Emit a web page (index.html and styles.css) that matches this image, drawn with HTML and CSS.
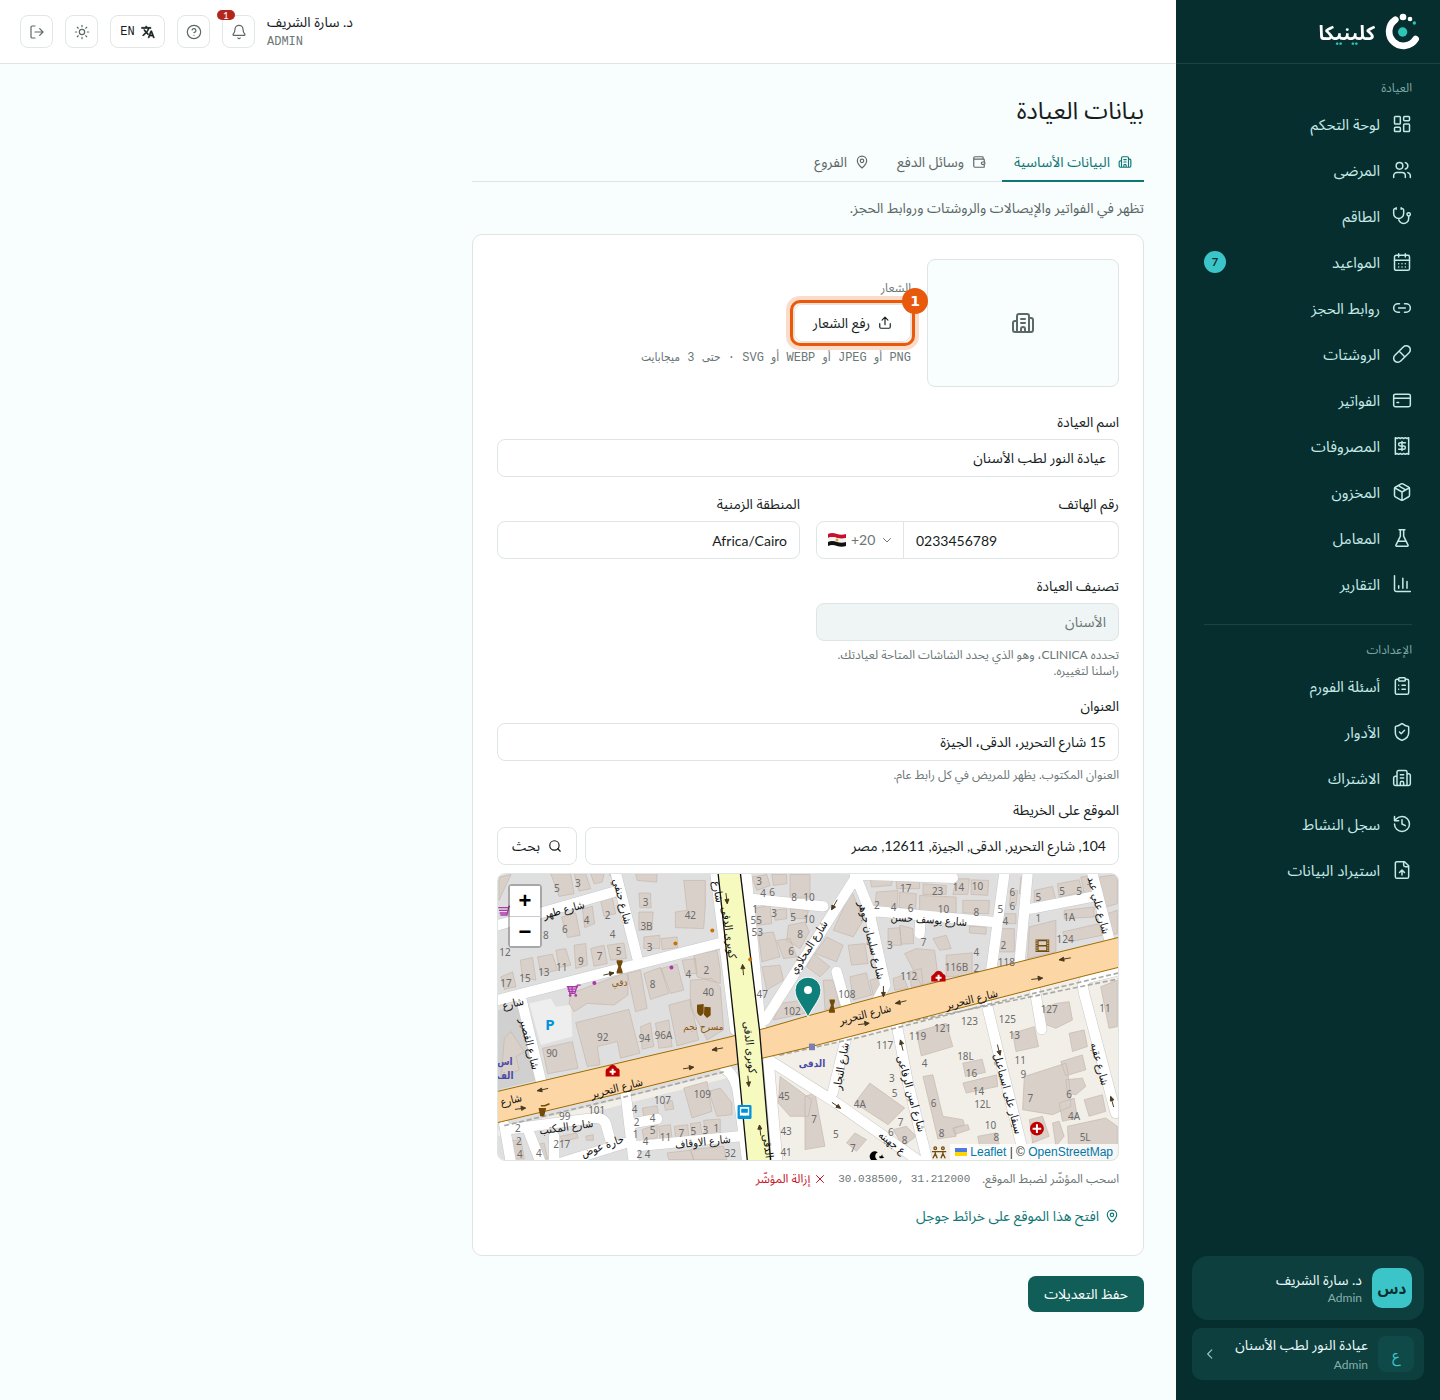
FILE: index.html
```html
<!DOCTYPE html>
<html lang="ar" dir="rtl">
<head>
<meta charset="utf-8">
<meta name="viewport" content="width=device-width, initial-scale=1">
<title>بيانات العيادة</title>
<link rel="stylesheet" href="styles.css">
</head>
<body>
<svg class="sprite" aria-hidden="true">
  <symbol id="i-dashboard" viewBox="0 0 24 24"><rect x="3" y="3" width="7" height="9" rx="1"/><rect x="14" y="3" width="7" height="5" rx="1"/><rect x="14" y="12" width="7" height="9" rx="1"/><rect x="3" y="16" width="7" height="5" rx="1"/></symbol>
  <symbol id="i-users" viewBox="0 0 24 24"><path d="M16 21v-2a4 4 0 0 0-4-4H6a4 4 0 0 0-4 4v2M22 21v-2a4 4 0 0 0-3-3.87M16 3.13a4 4 0 0 1 0 7.75"/><circle cx="9" cy="7" r="4"/></symbol>
  <symbol id="i-steth" viewBox="0 0 24 24"><path d="M11 2v2M5 2v2M5 3H4a2 2 0 0 0-2 2v4a6 6 0 0 0 12 0V5a2 2 0 0 0-2-2h-1M8 15a6 6 0 0 0 12 0v-3"/><circle cx="20" cy="10" r="2"/></symbol>
  <symbol id="i-calendar" viewBox="0 0 24 24"><rect x="3" y="4" width="18" height="18" rx="2"/><path d="M8 2v4M16 2v4M3 10h18M8 14h.01M12 14h.01M16 14h.01M8 18h.01M12 18h.01M16 18h.01"/></symbol>
  <symbol id="i-link" viewBox="0 0 24 24"><path d="M9 17H7A5 5 0 0 1 7 7h2M15 7h2a5 5 0 1 1 0 10h-2M8 12h8"/></symbol>
  <symbol id="i-pill" viewBox="0 0 24 24"><path d="m10.5 20.5 10-10a4.95 4.95 0 1 0-7-7l-10 10a4.95 4.95 0 1 0 7 7ZM8.5 8.5l7 7"/></symbol>
  <symbol id="i-card" viewBox="0 0 24 24"><rect x="2" y="5" width="20" height="15" rx="2"/><path d="M2 10h20M6 15h2"/></symbol>
  <symbol id="i-receipt" viewBox="0 0 24 24"><path d="M4 2v20l2-1 2 1 2-1 2 1 2-1 2 1 2-1 2 1V2l-2 1-2-1-2 1-2-1-2 1-2-1-2 1ZM16 8h-6a2 2 0 1 0 0 4h4a2 2 0 1 1 0 4H8M12 17.5v-11"/></symbol>
  <symbol id="i-package" viewBox="0 0 24 24"><path d="m7.5 4.27 9 5.15M21 8a2 2 0 0 0-1-1.73l-7-4a2 2 0 0 0-2 0l-7 4A2 2 0 0 0 3 8v8a2 2 0 0 0 1 1.73l7 4a2 2 0 0 0 2 0l7-4A2 2 0 0 0 21 16ZM3.3 7l8.7 5 8.7-5M12 22V12"/></symbol>
  <symbol id="i-flask" viewBox="0 0 24 24"><path d="M10 2v7.527a2 2 0 0 1-.211.896L4.72 20.55a1 1 0 0 0 .9 1.45h12.76a1 1 0 0 0 .9-1.45l-5.069-10.127A2 2 0 0 1 14 9.527V2M8.5 2h7M7 16h10"/></symbol>
  <symbol id="i-chart" viewBox="0 0 24 24"><path d="M3 2v17a2 2 0 0 0 2 2h17M8 17v-3M13 17V5M18 17V9"/></symbol>
  <symbol id="i-clipboard" viewBox="0 0 24 24"><rect x="8" y="2" width="8" height="4" rx="1"/><path d="M16 4h2a2 2 0 0 1 2 2v14a2 2 0 0 1-2 2H6a2 2 0 0 1-2-2V6a2 2 0 0 1 2-2h2M12 11h4M12 16h4M8 11h.01M8 16h.01"/></symbol>
  <symbol id="i-shield" viewBox="0 0 24 24"><path d="M20 13c0 5-3.5 7.500-7.660 8.950a1 1 0 0 1-.67-.01C7.500 20.500 4 18 4 13V6a1 1 0 0 1 1-1c2 0 4.500-1.200 6.240-2.720a1.170 1.170 0 0 1 1.520 0C14.510 3.810 17 5 19 5a1 1 0 0 1 1 1ZM9 12l2 2 4-4"/></symbol>
  <symbol id="i-building" viewBox="0 0 24 24"><path d="M10 12h4M10 8h4M14 21v-3a2 2 0 0 0-4 0v3M6 10H4a2 2 0 0 0-2 2v7a2 2 0 0 0 2 2h16a2 2 0 0 0 2-2V9a2 2 0 0 0-2-2h-2M6 21V5a2 2 0 0 1 2-2h8a2 2 0 0 1 2 2v16"/></symbol>
  <symbol id="i-history" viewBox="0 0 24 24"><path d="M3 12a9 9 0 1 0 9-9 9.750 9.750 0 0 0-6.740 2.740L3 8M3 3v5h5M12 7v5l4 2"/></symbol>
  <symbol id="i-fileup" viewBox="0 0 24 24"><path d="M15 2H6a2 2 0 0 0-2 2v16a2 2 0 0 0 2 2h12a2 2 0 0 0 2-2V7ZM14 2v4a2 2 0 0 0 2 2h4M12 12v6M15 15l-3-3-3 3"/></symbol>
  <symbol id="i-bell" viewBox="0 0 24 24"><path d="M10.268 21a2 2 0 0 0 3.464 0M3.262 15.326A1 1 0 0 0 4 17h16a1 1 0 0 0 .74-1.673C19.410 13.956 18 12.499 18 8A6 6 0 0 0 6 8c0 4.499-1.411 5.956-2.738 7.326"/></symbol>
  <symbol id="i-help" viewBox="0 0 24 24"><circle cx="12" cy="12" r="10"/><path d="M9.090 9a3 3 0 0 1 5.830 1c0 2-3 3-3 3M12 17h.01"/></symbol>
  <symbol id="i-sun" viewBox="0 0 24 24"><circle cx="12" cy="12" r="4"/><path d="M12 2v2M12 20v2M4.930 4.930l1.410 1.410M17.660 17.660l1.410 1.410M2 12h2M20 12h2M6.340 17.660l-1.410 1.410M19.070 4.930l-1.410 1.410"/></symbol>
  <symbol id="i-logout" viewBox="0 0 24 24"><path d="M9 21H5a2 2 0 0 1-2-2V5a2 2 0 0 1 2-2h4M16 17l5-5-5-5M21 12H9"/></symbol>
  <symbol id="i-translate" viewBox="0 0 24 24"><path d="M12.870 15.070l-2.540-2.510.03-.03A17.520 17.520 0 0 0 14.070 6H17V4h-7V2H8v2H1v2h11.170C11.500 7.920 10.440 9.750 9 11.350 8.070 10.320 7.300 9.190 6.690 8h-2c.73 1.630 1.730 3.170 2.980 4.560l-5.090 5.020L4 19l5-5 3.110 3.110.76-2.040zM18.500 10h-2L12 22h2l1.120-3h4.750L21 22h2l-4.500-12zm-2.620 7l1.620-4.330L19.120 17h-3.240z"/></symbol>
  <symbol id="i-wallet" viewBox="0 0 24 24"><path d="M19 7V4a1 1 0 0 0-1-1H5a2 2 0 0 0 0 4h15a1 1 0 0 1 1 1v4h-3a2 2 0 0 0 0 4h3a1 1 0 0 0 1-1v-2a1 1 0 0 0-1-1M3 5v14a2 2 0 0 0 2 2h15a1 1 0 0 0 1-1v-4"/></symbol>
  <symbol id="i-pin" viewBox="0 0 24 24"><path d="M20 10c0 4.990-5.540 10.190-7.400 11.800a1 1 0 0 1-1.200 0C9.540 20.190 4 14.990 4 10a8 8 0 0 1 16 0"/><circle cx="12" cy="10" r="3"/></symbol>
  <symbol id="i-upload" viewBox="0 0 24 24"><path d="M21 13v6a2 2 0 0 1-2 2H5a2 2 0 0 1-2-2v-6M17 7l-5-5-5 5M12 2v13"/></symbol>
  <symbol id="i-search" viewBox="0 0 24 24"><circle cx="11" cy="11" r="8"/><path d="m21 21-4.300-4.300"/></symbol>
  <symbol id="i-x" viewBox="0 0 24 24"><path d="M19 5 5 19M5 5l14 14"/></symbol>
  <symbol id="i-down" viewBox="0 0 24 24"><path d="m5 9 7 7 7-7"/></symbol>
  <symbol id="i-left" viewBox="0 0 24 24"><path d="m15 5-7 7 7 7"/></symbol>
</svg>

<div class="app">
  <aside class="sidebar">
    <a class="brand" href="#">
      <svg class="brand-mark" viewBox="627 39 108 114" aria-hidden="true"><path d="M661 59A43 43 0 1 0 722 117" fill="none" stroke="#fff" stroke-width="20" stroke-linecap="round"/><circle cx="684" cy="51" r="10" fill="#fff"/><circle cx="705" cy="57" r="7" fill="#fff"/><circle cx="718" cy="69" r="5" fill="#2ec4b6"/><circle cx="683" cy="96" r="14" fill="#2ec4b6"/></svg>
      <span class="brand-name">كلينيكا</span>
    </a>
    <nav class="nav" aria-label="القائمة الرئيسية">
      <h2 class="nav-title">العيادة</h2>
      <ul class="nav-list">
        <li><a href="#"><svg class="icon"><use href="#i-dashboard"/></svg>لوحة التحكم</a></li>
        <li><a href="#"><svg class="icon"><use href="#i-users"/></svg>المرضى</a></li>
        <li><a href="#"><svg class="icon"><use href="#i-steth"/></svg>الطاقم</a></li>
        <li><a href="#"><svg class="icon"><use href="#i-calendar"/></svg>المواعيد<span class="count">7</span></a></li>
        <li><a href="#"><svg class="icon"><use href="#i-link"/></svg>روابط الحجز</a></li>
        <li><a href="#"><svg class="icon"><use href="#i-pill"/></svg>الروشتات</a></li>
        <li><a href="#"><svg class="icon"><use href="#i-card"/></svg>الفواتير</a></li>
        <li><a href="#"><svg class="icon"><use href="#i-receipt"/></svg>المصروفات</a></li>
        <li><a href="#"><svg class="icon"><use href="#i-package"/></svg>المخزون</a></li>
        <li><a href="#"><svg class="icon"><use href="#i-flask"/></svg>المعامل</a></li>
        <li><a href="#"><svg class="icon"><use href="#i-chart"/></svg>التقارير</a></li>
      </ul>
      <hr class="nav-rule">
      <h2 class="nav-title">الإعدادات</h2>
      <ul class="nav-list">
        <li><a href="#"><svg class="icon"><use href="#i-clipboard"/></svg>أسئلة الفورم</a></li>
        <li><a href="#"><svg class="icon"><use href="#i-shield"/></svg>الأدوار</a></li>
        <li><a href="#"><svg class="icon"><use href="#i-building"/></svg>الاشتراك</a></li>
        <li><a href="#"><svg class="icon"><use href="#i-history"/></svg>سجل النشاط</a></li>
        <li><a href="#"><svg class="icon"><use href="#i-fileup"/></svg>استيراد البيانات</a></li>
      </ul>
    </nav>
    <div class="accounts">
      <div class="account">
        <span class="avatar">دس</span>
        <span class="who"><strong>د. سارة الشريف</strong><small>Admin</small></span>
      </div>
      <button class="clinic" type="button">
        <span class="avatar avatar-dim">ع</span>
        <span class="who"><strong>عيادة النور لطب الأسنان</strong><small>Admin</small></span>
        <svg class="icon icon-14"><use href="#i-left"/></svg>
      </button>
    </div>
  </aside>

  <div class="page">
    <header class="topbar">
      <div class="me"><span class="me-name">د. سارة الشريف</span><span class="me-role">ADMIN</span></div>
      <button class="tool" type="button" aria-label="الإشعارات"><svg class="icon icon-16"><use href="#i-bell"/></svg><span class="alert">1</span></button>
      <button class="tool" type="button" aria-label="مساعدة"><svg class="icon icon-16"><use href="#i-help"/></svg></button>
      <button class="tool tool-lang" type="button"><svg class="icon-solid"><use href="#i-translate"/></svg>EN</button>
      <button class="tool" type="button" aria-label="المظهر"><svg class="icon icon-16"><use href="#i-sun"/></svg></button>
      <button class="tool" type="button" aria-label="خروج"><svg class="icon icon-16"><use href="#i-logout"/></svg></button>
    </header>

    <main class="main">
      <form class="content">
        <h1>بيانات العيادة</h1>
        <nav class="tabs" aria-label="أقسام البيانات">
          <a class="tab is-active" href="#"><svg class="icon icon-14"><use href="#i-building"/></svg>البيانات الأساسية</a>
          <a class="tab" href="#"><svg class="icon icon-14"><use href="#i-wallet"/></svg>وسائل الدفع</a>
          <a class="tab" href="#"><svg class="icon icon-14"><use href="#i-pin"/></svg>الفروع</a>
        </nav>
        <p class="lead">تظهر في الفواتير والإيصالات والروشتات وروابط الحجز.</p>

        <section class="card">
          <div class="logo-row">
            <div class="logo-box"><svg class="icon icon-24"><use href="#i-building"/></svg></div>
            <div class="logo-info">
              <span class="hint">الشعار</span>
              <div class="spot">
                <button class="btn" type="button"><svg class="icon icon-14"><use href="#i-upload"/></svg>رفع الشعار</button>
                <span class="step">1</span>
              </div>
              <span class="hint hint-mono">PNG أو JPEG أو WEBP أو SVG · حتى 3 ميجابايت</span>
            </div>
          </div>

          <div class="fields">
            <div class="field wide">
              <label for="name">اسم العيادة</label>
              <input id="name" type="text" value="عيادة النور لطب الأسنان">
            </div>
            <div class="field">
              <label for="phone">رقم الهاتف</label>
              <div class="phone" dir="ltr">
                <div class="dial">
                  <svg class="flag" viewBox="0 0 20 16" aria-hidden="true"><path d="M1 2c3-1.500 6-1 9 0s6 1 9 0v4c-3 1-6 1-9 0s-6-1.500-9 0z" fill="#c8102e"/><path d="M1 6c3-1.500 6-1 9 0s6 1 9 0v4c-3 1-6 1-9 0s-6-1.500-9 0z" fill="#f4f4f4"/><path d="M1 10c3-1.500 6-1 9 0s6 1 9 0v4c-3 1-6 1-9 0s-6-1.500-9 0z" fill="#111"/><circle cx="10" cy="8" r="1.500" fill="#d9a93a"/></svg>
                  <select aria-label="كود الدولة"><option>+20</option></select>
                  <svg class="icon icon-12"><use href="#i-down"/></svg>
                </div>
                <input id="phone" type="tel" value="0233456789">
              </div>
            </div>
            <div class="field">
              <label for="zone">المنطقة الزمنية</label>
              <input id="zone" type="text" value="Africa/Cairo">
            </div>
            <div class="field half">
              <label for="kind">تصنيف العيادة</label>
              <input id="kind" type="text" value="الأسنان" disabled>
              <p class="hint">تحدده CLINICA، وهو الذي يحدد الشاشات المتاحة لعيادتك.<br>راسلنا لتغييره.</p>
            </div>
            <div class="field wide">
              <label for="address">العنوان</label>
              <input id="address" type="text" value="15 شارع التحرير، الدقى، الجيزة">
              <p class="hint">العنوان المكتوب. يظهر للمريض في كل رابط عام.</p>
            </div>
          </div>

          <div class="field location">
            <label for="place">الموقع على الخريطة</label>
            <div class="search">
              <input id="place" type="text" value="104, شارع التحرير, الدقى, الجيزة, 12611, مصر">
              <button class="btn" type="button"><svg class="icon icon-14"><use href="#i-search"/></svg>بحث</button>
            </div>
          </div>

          <div class="map" dir="ltr">
            <svg class="map-art" viewBox="0 0 622 288" preserveAspectRatio="xMidYMid slice" role="img" aria-label="خريطة الدقى">
              <rect width="622" height="288" fill="#e0dfdf"/>
              <g transform="translate(-7 -3) scale(.33333)">
                <path d="M840 540 1890 280V880H840zM20 780 740 600 770 880H20z" fill="#f2efe9"/>
                <path d="M20 800 730 620 760 880H20z" fill="#e0dfdf"/>
                <path d="M20 420 95 410 145 630 20 660z" fill="#d0d0d0"/>
                <path d="M115 400 180 385 195 410 240 405 245 500 150 525z" fill="#eee"/>
                <g class="b">
                  <path d="M180 10 240 10 250 70 205 78zM250 10 285 10 300 55 265 62zM300 10 340 10 335 35 310 40zM24 20 60 12 24 90zM30 320 65 305 75 350 40 358zM88 270 125 262 135 330 95 322zM140 260 185 252 200 300 150 312zM195 240 225 235 240 285 205 292zM250 225 285 220 290 285 255 295zM300 235 340 225 350 280 310 288zM350 225 400 218 408 265 360 270zM330 90 365 82 375 130 340 138zM275 115 305 108 312 160 282 172zM212 140 255 128 268 195 230 202zM445 68 480 68 482 112 448 112zM445 125 488 125 484 180 445 180zM355 10 385 10 388 15 360 18z"/>
                  <path d="M435 10 500 10 498 35 440 30zM580 30 645 30 645 105 640 175 555 172 555 125 590 120zM460 200 508 195 508 235 460 235zM512 205 560 200 562 232 515 238zM235 400 240 370 400 310 412 315 412 375 370 405 290 400 250 425zM410 310 450 300 470 415 435 425zM460 310 510 292 535 370 480 388zM512 295 560 282 580 360 540 370zM575 270 615 265 620 310 585 312zM610 255 680 240 690 300 690 340 620 320zM600 330 665 325 690 350 700 480 650 510 600 410zM255 458 415 418 448 550 390 565 380 515 320 530 328 585 290 590zM450 470 480 458 490 530 455 538zM535 405 600 388 625 510 560 528zM495 460 535 450 545 530 505 535zM155 535 245 515 262 595 170 612zM40 505 60 485 100 545 75 560 85 600 30 625z"/>
                  <path d="M580 655 650 635 665 725 605 745zM655 665 690 655 725 700 725 735 680 740zM520 700 545 692 550 718 525 722zM455 715 500 708 505 745 460 740zM455 780 500 765 500 805 460 810zM505 770 540 765 545 808 508 812zM552 770 592 765 595 800 555 805zM600 762 630 758 635 798 605 800zM640 752 690 748 690 795 645 798zM530 850 600 842 610 870 535 870zM600 840 700 830 710 870 610 870zM208 800 258 790 262 805 215 815zM285 800 308 795 308 812 288 812zM50 815 90 810 100 868 60 868zM120 830 160 820 170 868 130 868z"/>
                  <path d="M785 20 830 12 840 45 800 60zM845 12 890 12 890 40 850 45zM900 12 960 12 960 80 900 82zM785 115 840 105 845 160 800 165zM850 120 890 115 890 145 855 150zM900 115 955 120 950 145 905 145zM895 165 945 155 958 185 930 235 890 210zM860 210 900 205 920 260 880 265zM805 190 850 185 870 260 815 275zM815 290 870 285 880 330 830 360zM870 400 940 390 945 430 850 450z"/>
                  <path d="M1085 60 1120 150 1090 200 1030 180zM1010 200 1060 225 1040 275 975 250zM1075 225 1125 220 1135 280 1085 285zM1000 330 1030 330 1050 410 1005 420zM1080 320 1130 308 1145 375 1090 390zM1140 330 1180 320 1180 370 1150 375zM970 250 1020 290 990 320 950 290z"/>
                  <path d="M1140 15 1210 20 1205 45 1145 50zM1160 65 1225 60 1222 115 1155 110zM1230 65 1280 70 1278 118 1228 112zM1290 75 1400 80 1400 128 1290 122zM1220 20 1290 22 1290 55 1220 55zM1300 40 1370 45 1370 72 1300 72zM1400 25 1440 25 1435 72 1390 72zM1445 28 1498 30 1495 75 1445 72zM1420 90 1500 90 1498 130 1420 128zM1195 175 1230 172 1235 225 1195 225zM1230 165 1270 175 1272 220 1235 222zM1245 250 1280 235 1335 240 1345 315 1350 330 1295 345zM1330 205 1370 195 1385 235 1350 240zM1370 255 1448 248 1448 315 1370 320zM1210 325 1240 315 1255 355 1215 360zM1260 305 1295 295 1300 345 1265 352zM1440 168 1490 170 1490 192 1440 188z"/>
                  <path d="M1565 60 1585 60 1580 105 1560 105zM1595 20 1615 20 1610 70 1590 70zM1535 130 1580 130 1580 160 1535 160zM1530 175 1575 175 1575 245 1530 245zM1635 60 1690 48 1700 90 1635 100zM1705 40 1770 28 1780 65 1710 80zM1775 20 1810 15 1815 65 1785 68zM1620 170 1700 150 1700 245 1615 265zM1725 120 1815 110 1815 140 1725 145zM1720 185 1830 160 1840 195 1740 215zM1830 20 1885 12 1885 100 1850 110zM1855 130 1885 120 1885 190 1865 195z"/>
                  <path d="M1280 485 1370 460 1390 530 1295 558zM1420 580 1478 568 1488 608 1428 620zM1420 640 1522 615 1525 650 1430 670zM1300 620 1330 615 1360 740 1420 750 1425 765 1395 775 1400 800 1345 808zM1390 775 1435 765 1440 780 1395 795zM1140 640 1245 715 1195 765 1095 700zM1210 780 1250 770 1280 800 1240 830zM1070 820 1095 790 1130 810 1100 845zM1465 800 1520 790 1530 825 1470 830zM1570 490 1635 470 1648 530 1580 545zM1660 415 1700 400 1740 395 1750 450 1700 475 1660 460zM1605 620 1730 580 1735 600 1740 640 1745 710 1690 735 1600 720zM1715 575 1780 555 1790 600 1730 618zM1740 490 1785 480 1795 530 1750 545zM1730 630 1780 625 1790 650 1760 675 1735 670zM1710 700 1755 685 1765 745 1720 755zM1785 690 1840 675 1850 725 1800 740zM1735 770 1850 745 1885 770 1885 870 1740 865zM1620 750 1660 740 1680 800 1630 820zM1690 760 1710 755 1725 800 1700 830zM1835 350 1885 330 1885 470 1860 475zM870 620 965 690 955 740 900 740 865 700zM945 680 975 670 1005 830 945 840z"/>
                </g>
                <g class="casing">
                  <path d="M20 165 385 60M375 5 440 262M20 390 690 218M92 390 150 632M675 5 735 480M768 5 812 480M780 85 1000 108M1095 25 825 450M1095 10 1135 110 1187 345 1160 395M1095 12 1390 22M1130 120 1510 155M1292 155 1290 190M1545 9 1505 305M1615 9 1590 285M1625 115 1805 80M1810 9 1860 205M1040 305 1072 418M1072 490 1028 670M835 570 945 640 1040 700 1310 890M1220 460 1255 640 1315 880M1490 395 1535 580 1610 880M1635 350 1657 478M1890 300 1800 322Q1775 330 1785 370L1880 730M405 670 430 880M40 765 60 880M60 778 310 745Q345 740 350 780L362 820M115 790 150 880M190 800 190 880M210 880 420 815M440 830 745 800M705 598Q740 620 745 680L772 880M430 760 500 748M835 570 862 880"/>
                </g>
                <g class="road">
                  <path d="M20 165 385 60M375 5 440 262M20 390 690 218M92 390 150 632M675 5 735 480M768 5 812 480M780 85 1000 108M1095 25 825 450M1095 10 1135 110 1187 345 1160 395M1095 12 1390 22M1130 120 1510 155M1292 155 1290 190M1545 9 1505 305M1615 9 1590 285M1625 115 1805 80M1810 9 1860 205M1040 305 1072 418M1072 490 1028 670M835 570 945 640 1040 700 1310 890M1220 460 1255 640 1315 880M1490 395 1535 580 1610 880M1635 350 1657 478M1890 300 1800 322Q1775 330 1785 370L1880 730M405 670 430 880M40 765 60 880M60 778 310 745Q345 740 350 780L362 820M115 790 150 880M190 800 190 880M210 880 420 815M440 830 745 800M705 598Q740 620 745 680L772 880M430 760 500 748M835 570 862 880"/>
                </g>
                <path d="M40 768 400 682 700 606M868 556 1110 502 1500 402 1890 308M1210 465 1890 326" fill="none" stroke="#aaa9a6" stroke-width="5" stroke-dasharray="15 8"/>
                <path d="M15 666 660 515 825 475 945 440 1215 367 1895 200V290L1775 320 1485 395 945 535 740 583 400 668 15 760z" fill="#fcd6a4" stroke="#a06b00" stroke-width="3"/>
                <path d="M683 5 735 490 772 880H842L808 480 750 5z" fill="#f7fabf"/>
                <path d="M683 5 735 490 772 880M842 880 808 480 750 5" fill="none" stroke="#111" stroke-width="4"/>
                <g stroke="#4a3a20" stroke-width="3" fill="#4a3a20">
                  <path d="M139 663 172 656M139 663 152 655 154 666zM104 715 72 719M104 715 90 709 92 722zM665 540 698 534M665 540 678 532 680 544zM610 592 578 597M610 592 596 587 598 600zM1217 400 1250 392M1217 400 1230 391 1232 403zM1138 460 1105 464M1138 460 1124 454 1126 467zM1710 269 1745 263M1710 269 1723 261 1725 273zM1660 324 1626 328M1660 324 1646 318 1648 331zM370 308 338 315M370 308 356 305 358 317z"/>
                  <path d="M711 100 707 68M711 100 704 88 716 86zM757 283 760 315M757 283 752 296 764 295zM776 650 773 618M776 650 769 638 781 636zM808 766 812 798M808 766 803 779 815 778zM1025 118 1042 88M1025 118 1026 104 1037 110zM1181 380 1181 348M1181 380 1175 367 1187 367zM1232 510 1240 542M1232 510 1230 524 1242 521zM1532 556 1524 524M1532 556 1523 545 1535 542zM1052 716 1026 698M1052 716 1038 713 1045 704zM1865 680 1874 712M1865 680 1864 694 1875 690z"/>
                </g>
                <g fill="#c77400"><circle cx="666" cy="181" r="6"/><circle cx="555" cy="220" r="6"/><circle cx="780" cy="268" r="6"/></g>
                <g fill="#ac39ac"><circle cx="543" cy="292" r="6"/><circle cx="311" cy="339" r="6"/></g>
                <g fill="none" stroke="#ac39ac" stroke-width="4"><path d="M270 345 260 345 252 370H235M228 350H262M230 357H258M232 364H254M232 350 238 370M244 350V370"/><path d="M60 108 54 108 48 134H28M22 112H54M24 120H52M26 128H50"/></g>
                <g fill="#ac39ac"><circle cx="238" cy="376" r="4"/><circle cx="255" cy="376" r="4"/></g>
                <path d="M345 620V602Q346 595 352 595Q366 575 380 595Q387 595 387 602V620zM1325 334V318Q1330 313 1332 312Q1347 292 1362 312Q1368 313 1368 320V334z" fill="#bf0000"/>
                <circle cx="1643" cy="777" r="21" fill="#bf0000"/>
                <path d="M366 597V615M357 606H375M1347 314V332M1338 323H1356M1643 764V790M1630 777H1656" stroke="#fff" stroke-width="6"/>
                <g fill="#734a08"><path d="M378 270H396V276L391 290 396 304V310H378V304L383 290 378 276zM1019 388H1035V394L1031 406 1035 422V428H1017V422L1023 406 1019 394zM143 715H166L160 740H148zM620 404 640 402V430L632 438Q622 435 620 425zM642 410 661 412V436L650 444 641 434z"/><path d="M1639 208H1680V245H1639z"/></g>
                <path d="M1648 213H1671V224H1648zM1648 229H1671V240H1648z" fill="#d9d0c9"/>
                <path d="M1643 210V244M1676 210V244" stroke="#e0dfdf" stroke-width="3" stroke-dasharray="4 3"/>
                <path d="M150 708H162L176 702" fill="none" stroke="#734a08" stroke-width="5"/>
                <rect x="742" y="706" width="42" height="42" rx="4" fill="#0092da"/><path d="M749 712H777V738H749z" fill="#fff"/><path d="M753 717H773V729H753zM752 738H758V743H752zM768 738H774V743H768z" fill="#0092da"/>
                <rect x="957" y="521" width="18" height="20" fill="#7981b0"/>
                <g stroke="#734a08" stroke-width="4" fill="none"><circle cx="1337" cy="836" r="4"/><circle cx="1360" cy="836" r="4"/><path d="M1327 846H1370M1337 844V852L1330 866M1337 852 1343 866M1360 844V852L1354 866M1360 852 1367 866"/></g>
                <path d="M1164 848A15 15 0 0 0 1146 873H1180A18 18 0 0 1 1158 866 14 14 0 0 1 1164 848zM1168 860 1174 860 1177 854 1179 861 1184 863 1178 866 1170 866z" fill="#000"/>
              </g>
              <g class="num">
                <text x="59" y="19">5</text><text x="80" y="14">3</text><text x="148" y="33">3</text><text x="193" y="46">42</text><text x="110" y="46">2</text><text x="89" y="51">4</text><text x="67" y="60">6</text><text x="48" y="66">8</text><text x="115" y="65">4</text><text x="149" y="57">3B</text><text x="152" y="78">3</text><text x="7" y="83">12</text><text x="121" y="82">5</text><text x="102" y="87">7</text><text x="83" y="92">9</text><text x="64" y="98">11</text><text x="46" y="103">13</text><text x="27" y="109">15</text><text x="8" y="114">17</text><text x="155" y="115">8</text><text x="191" y="105">4</text><text x="209" y="101">2</text><text x="211" y="123">40</text><text x="105" y="168">92</text><text x="147" y="169">94</text><text x="166" y="166">96A</text><text x="54" y="184">90</text>
                <text x="258" y="40">1</text><text x="259" y="51">55</text><text x="260" y="63">53</text><text x="265" y="125">47</text><text x="295" y="142">102</text><text x="262" y="12">3</text><text x="266" y="24">4</text><text x="275" y="23">6</text><text x="297" y="28">8</text><text x="312" y="28">10</text><text x="277" y="44">3</text><text x="296" y="48">5</text><text x="312" y="50">10</text><text x="303" y="65">8</text><text x="294" y="82">6</text>
                <text x="165" y="231">107</text><text x="205" y="225">109</text><text x="99" y="241">101</text><text x="67" y="247">99</text><text x="137" y="240">4</text><text x="155" y="249">4</text><text x="139" y="253">2</text><text x="20" y="259">2</text><text x="21" y="272">2</text><text x="22" y="285">4</text><text x="41" y="284">4</text><text x="64" y="275">217</text><text x="138" y="265">1</text><text x="155" y="261">5</text><text x="148" y="272">4</text><text x="168" y="268">11</text><text x="184" y="264">7</text><text x="196" y="262">5</text><text x="208" y="261">3</text><text x="219" y="259">1</text><text x="146" y="285">2 4</text><text x="233" y="284">32</text><text x="287" y="227">45</text><text x="289" y="262">43</text><text x="289" y="283">41</text>
                <text x="409" y="19">17</text><text x="441" y="22">23</text><text x="462" y="18">14</text><text x="481" y="17">10</text><text x="516" y="23">6</text><text x="516" y="37">6</text><text x="504" y="40">5</text><text x="542" y="28">5</text><text x="566" y="22">5</text><text x="583" y="22">5</text><text x="380" y="36">2</text><text x="397" y="38">4</text><text x="414" y="39">6</text><text x="447" y="40">10</text><text x="480" y="43">8</text><text x="509" y="52">4</text><text x="542" y="49">1</text><text x="573" y="48">1A</text><text x="569" y="70">124</text><text x="393" y="76">3</text><text x="427" y="73">7</text><text x="480" y="83">4</text><text x="507" y="76">2</text><text x="510" y="93">118</text><text x="460" y="98">116B</text><text x="480" y="99">2</text><text x="412" y="107">112</text><text x="350" y="125">108</text><text x="553" y="140">127</text><text x="473" y="152">123</text><text x="511" y="150">125</text><text x="446" y="159">121</text><text x="421" y="167">119</text><text x="388" y="176">117</text><text x="518" y="166">13</text><text x="609" y="139">11</text>
                <text x="469" y="187">18L</text><text x="524" y="191">11</text><text x="475" y="204">16</text><text x="527" y="205">9</text><text x="428" y="194">4</text><text x="395" y="209">3</text><text x="398" y="224">5</text><text x="482" y="222">14</text><text x="486" y="235">12L</text><text x="363" y="235">4A</text><text x="437" y="234">6</text><text x="534" y="229">7</text><text x="573" y="225">6</text><text x="578" y="247">4A</text><text x="404" y="253">7</text><text x="394" y="263">6</text><text x="494" y="256">10</text><text x="445" y="264">8</text><text x="589" y="268">5L</text><text x="317" y="250">7</text><text x="339" y="265">5</text><text x="356" y="279">7</text><text x="408" y="271">8</text><text x="500" y="268">8</text>
              </g>
              <g class="street">
                <text transform="translate(67 40) rotate(-15)">شارع طهر</text>
                <text transform="translate(121 29) rotate(75)">شارع حنفي</text>
                <text transform="translate(217 19) rotate(80)">شارع</text>
                <text transform="translate(228 60) rotate(82)">كوبرى الدقى</text>
                <text transform="translate(249 175) rotate(84)">كوبرى الدقى</text>
                <text transform="translate(267 274) rotate(82)">الدقى</text>
                <text transform="translate(28 172) rotate(76)">شارع القصير</text>
                <text transform="translate(16 134) rotate(-14)">شارع</text>
                <text transform="translate(120 219) rotate(-14)">شارع التحرير</text>
                <text transform="translate(14 231) rotate(-14)">شارع</text>
                <text transform="translate(369 145) rotate(-14)">شارع التحرير</text>
                <text transform="translate(476 130) rotate(-14)">شارع التحرير</text>
                <text transform="translate(69 258) rotate(-8)">شارع المكتب</text>
                <text transform="translate(106 277) rotate(-20)">حارة عوض</text>
                <text transform="translate(206 273) rotate(-6)">شارع الاوقاف</text>
                <text transform="translate(432 50) rotate(4)">شارع يوسف حسن</text>
                <text transform="translate(371 68) rotate(76)">شارع سليمان جوهر</text>
                <text transform="translate(315 76) rotate(-58)">شارع المحلاوي</text>
                <text transform="translate(599 33) rotate(75)">شارع علي عبد</text>
                <text transform="translate(348 194) rotate(-80)">شارع النجار</text>
                <text transform="translate(411 222) rotate(74)">شارع امين الرفاعى</text>
                <text transform="translate(508 222) rotate(75)">سيقار على اسماعيل</text>
                <text transform="translate(600 192) rotate(75)">شارع عقبه</text>
                <text transform="translate(393 273) rotate(38)">ع جهينه</text>
              </g>
              <g class="poi">
                <text x="122" y="113">دقي</text><text x="206" y="157">مسرح نجم</text>
              </g>
              <g class="station">
                <text x="315" y="194">الدقى</text><text x="7" y="192">اس</text><text x="7" y="206">الف</text>
              </g>
              <text class="parking" x="52" y="157">P</text>
              <path d="M311 144C305 132 298 126 298 117A13 13 0 0 1 324 117C324 126 317 132 311 144Z" fill="#0f7f7c" stroke="#fff" stroke-width="1"/>
              <circle cx="311" cy="117" r="4" fill="#fff"/>
            </svg>
            <div class="zoom">
              <button type="button" aria-label="تكبير">+</button>
              <button type="button" aria-label="تصغير">−</button>
            </div>
            <div class="credit"><svg class="ua" viewBox="0 0 12 8" aria-hidden="true"><path d="M0 0h12v4H0z" fill="#4c7be1"/><path d="M0 4h12v4H0z" fill="#ffd500"/></svg> <a href="#">Leaflet</a> | © <a href="#">OpenStreetMap</a></div>
          </div>

          <div class="map-foot">
            <span>اسحب المؤشّر لضبط الموقع.</span>
            <span class="coords" dir="ltr">30.038500, 31.212000</span>
            <button class="remove" type="button"><svg class="icon icon-12"><use href="#i-x"/></svg>إزالة المؤشّر</button>
          </div>
          <a class="maps-link" href="#"><svg class="icon icon-14"><use href="#i-pin"/></svg>افتح هذا الموقع على خرائط جوجل</a>
        </section>

        <button class="save" type="submit">حفظ التعديلات</button>
      </form>
    </main>
  </div>
</div>
</body>
</html>
```
FILE: styles.css
```css
* { box-sizing: border-box; }

body {
  margin: 0;
  background: #f8fdfd;
  color: #161d1d;
  font-family: Lato, "Noto Sans Arabic", "DejaVu Sans Condensed", "DejaVu Sans", sans-serif;
  font-size: 14px;
  line-height: 20px;
}

h1, h2, p, ul { margin: 0; padding: 0; font-weight: 400; }
ul { list-style: none; }
a { color: inherit; text-decoration: none; }
button, input, select { font: inherit; color: inherit; }
button { cursor: pointer; }

.sprite { display: none; }

.icon {
  width: 20px;
  height: 20px;
  flex: none;
  fill: none;
  stroke: currentColor;
  stroke-width: 2;
  stroke-linecap: round;
  stroke-linejoin: round;
}
.icon-24 { width: 24px; height: 24px; }
.icon-16 { width: 16px; height: 16px; }
.icon-14 { width: 14px; height: 14px; }
.icon-12 { width: 12px; height: 12px; }
.icon-solid { width: 14px; height: 14px; fill: currentColor; stroke: currentColor; }

.app {
  display: grid;
  grid-template-columns: 264px minmax(0, 1fr);
  min-height: 100vh;
}

/* Sidebar */
.sidebar {
  position: sticky;
  top: 0;
  height: 100vh;
  display: flex;
  flex-direction: column;
  background: #062e2e;
  color: #c5e9e7;
}
.brand {
  flex: none;
  display: flex;
  align-items: center;
  gap: 9px;
  height: 64px;
  padding: 0 20px;
  border-bottom: 1px solid #1d4444;
}
.brand-mark { width: 36px; height: 38px; }
/* White lettering with its dots picked out in teal */
.brand-name {
  background:
    linear-gradient(#2ec4b6, #2ec4b6) 27px 4px / 6px 9px no-repeat,
    linear-gradient(#fff 25px, #2ec4b6 25px);
  background-clip: text;
  color: transparent;
  font-size: 20px;
  line-height: 32px;
  font-weight: 700;
}
.nav { flex: 1; padding: 16px 16px 0; }
.nav-title {
  padding: 0 12px;
  color: #7fa8a6;
  font-size: 12px;
  line-height: 16px;
}
.nav-list { padding-top: 5px; }
.nav-list a {
  display: flex;
  align-items: center;
  gap: 12px;
  height: 46px;
  padding: 0 12px;
  font-size: 15px;
}
.nav-list .icon { stroke-width: 1.8; }
.count {
  margin-inline-start: auto;
  width: 22px;
  height: 22px;
  border-radius: 11px;
  background: #3cc5c8;
  color: #062e2e;
  font-size: 11px;
  line-height: 22px;
  font-weight: 700;
  text-align: center;
}
.nav-rule { margin: 17px 12px; border: 0; border-top: 1px solid #1d4444; }
.accounts { display: flex; flex-direction: column; gap: 8px; padding: 0 16px 20px; }
.account, .clinic {
  display: flex;
  align-items: center;
  gap: 10px;
  border: 0;
  background: #0d3f3e;
  color: #c5e9e7;
  text-align: start;
}
.account { padding: 12px; border-radius: 16px; }
.clinic { padding: 7px 10px; border-radius: 10px; }
.clinic .who { gap: 2px; }
.clinic .icon { margin: 0 auto 0 0; margin-inline: auto 1px; color: #9cc4c2; }
.avatar {
  width: 40px;
  height: 40px;
  border-radius: 10px;
  background: #3cc5c8;
  color: #062e2e;
  font-size: 15px;
  line-height: 40px;
  font-weight: 700;
  text-align: center;
}
.avatar-dim {
  width: 36px;
  height: 36px;
  border-radius: 8px;
  background: #104a48;
  color: #3cc5c8;
  line-height: 36px;
  font-weight: 400;
}
.who { display: flex; flex-direction: column; }
.who strong { color: #eafafa; font-size: 14px; line-height: 20px; font-weight: 400; }
.who small { color: #86b0ae; font-size: 12px; line-height: 16px; }

/* Top bar */
.topbar {
  display: flex;
  align-items: center;
  justify-content: flex-end;
  gap: 12px;
  height: 64px;
  padding: 0 20px;
  border-bottom: 1px solid #dfe5e5;
  background: #fff;
}
.me { display: flex; flex-direction: column; align-items: flex-end; gap: 2px; padding-bottom: 2px; }
.me-name { line-height: 20px; }
.me-role { color: #6b7676; font: 12px/16px "Liberation Mono", monospace; }
.tool {
  position: relative;
  display: flex;
  align-items: center;
  justify-content: center;
  gap: 6px;
  width: 33px;
  height: 33px;
  padding: 0;
  border: 1px solid #e1e6e6;
  border-radius: 8px;
  background: #fff;
  color: #5d6868;
}
.tool .icon { stroke-width: 1.8; }
.tool-lang {
  width: 55px;
  color: #161d1d;
  font: 12px/16px "Liberation Mono", monospace;
}
.alert {
  position: absolute;
  top: -6px;
  left: -6px;
  width: 18px;
  height: 10px;
  border-radius: 5px;
  background: #b3261e;
  color: #fff;
  font-size: 10px;
  line-height: 10px;
  text-align: center;
}

/* Content */
.main { padding: 32px; }
.content { max-width: 672px; }
h1 { font-size: 24px; line-height: 28px; }
.tabs {
  display: flex;
  gap: 4px;
  margin-top: 20px;
  border-bottom: 1px solid #dfe5e5;
}
.tab {
  display: flex;
  align-items: center;
  gap: 8px;
  height: 38px;
  margin-bottom: -1px;
  padding: 0 12px;
  border-bottom: 2px solid transparent;
  color: #5d6868;
}
.tab.is-active { border-color: #0f7674; color: #0f7674; }
.lead { margin-top: 16px; color: #5d6868; line-height: 20px; }
.card {
  margin-top: 16px;
  padding: 24px;
  border: 1px solid #dfe5e5;
  border-radius: 10px;
  background: #fff;
}
.logo-row { display: flex; align-items: center; gap: 16px; margin-bottom: 24px; }
.logo-box {
  flex: none;
  display: flex;
  align-items: center;
  justify-content: center;
  width: 192px;
  height: 128px;
  border: 1px solid #dfe5e5;
  border-radius: 8px;
  background: #f8fdfd;
  color: #5d6868;
}
.logo-info { display: flex; flex-direction: column; align-items: flex-start; gap: 8px; }
.hint { color: #6b7676; font-size: 12px; line-height: 16px; }
.hint-mono { font-family: "Liberation Mono", "DejaVu Sans Condensed", monospace; }
.btn {
  display: flex;
  align-items: center;
  justify-content: center;
  gap: 8px;
  height: 38px;
  padding: 0 14px;
  border: 1px solid #dfe5e5;
  border-radius: 8px;
  background: #fff;
}
.spot {
  position: relative;
  border-radius: 6px;
  outline: 3px solid #e8590c;
  outline-offset: 1px;
  box-shadow: 0 0 0 8px #fbdccb;
}
.spot .btn { min-width: 117px; }
.step {
  position: absolute;
  top: -16px;
  right: -17px;
  width: 26px;
  height: 26px;
  border-radius: 13px;
  background: #e8590c;
  color: #fff;
  font: 700 14px/26px "DejaVu Sans", sans-serif;
  text-align: center;
}
.fields { display: grid; grid-template-columns: 1fr 1fr; gap: 16px; }
.wide { grid-column: 1 / -1; }
.half { grid-column: 1 / 2; }
.field { display: flex; flex-direction: column; gap: 6px; min-width: 0; }
.field label { font-size: 14px; line-height: 22px; }
.field input {
  width: 100%;
  height: 38px;
  padding: 0 12px;
  border: 1px solid #dfe5e5;
  border-radius: 8px;
  background: #fff;
}
.field input:disabled { background: #eff4f4; color: #6b7676; }
.phone { display: flex; height: 38px; }
.dial {
  flex: none;
  display: flex;
  align-items: center;
  width: 88px;
  padding: 0 10px;
  border: 1px solid #dfe5e5;
  border-radius: 8px 0 0 8px;
  color: #6b7676;
}
.dial select {
  width: 34px;
  padding: 0 0 0 4px;
  border: 0;
  background: none;
  appearance: none;
}
.flag { width: 20px; height: 16px; flex: none; }
.phone input { flex: 1; border-left: 0; border-radius: 0 8px 8px 0; }
.location { margin-top: 16px; }
.search { display: flex; gap: 8px; }
.search input { flex: 1; min-width: 0; }
.search .btn { flex: none; min-width: 80px; }

/* Map */
.map {
  position: relative;
  height: 288px;
  margin-top: 8px;
  border: 1px solid #dfe5e5;
  border-radius: 8px;
  overflow: hidden;
}
.map-art { display: block; width: 100%; height: 100%; }
.b { fill: #d9d0c9; stroke: #c4b6ab; stroke-width: 2; }
.casing, .road { fill: none; stroke-linejoin: round; stroke-linecap: round; }
.casing { stroke: #c9c8c8; stroke-width: 34; }
.road { stroke: #fff; stroke-width: 31; }
.num, .street, .poi, .station { text-anchor: middle; font-family: "Noto Sans", "DejaVu Sans Condensed", sans-serif; }
.num { fill: #6a6a6a; font-size: 10px; }
.street { fill: #111; font-size: 11px; }
.poi { fill: #8a5a14; font-size: 10px; }
.station { fill: #4a4aa8; font-size: 10px; font-weight: 700; }
.parking { fill: #0092da; font: 700 15px "Noto Sans", sans-serif; text-anchor: middle; }
.zoom {
  position: absolute;
  top: 10px;
  left: 10px;
  border: 2px solid rgba(0, 0, 0, .25);
  border-radius: 4px;
  background-clip: padding-box;
}
.zoom button {
  display: block;
  width: 30px;
  height: 30px;
  padding: 0;
  border: 0;
  background: #fff;
  color: #000;
  font: 700 22px/30px "Liberation Sans", sans-serif;
}
.zoom button + button { border-top: 1px solid #ccc; }
.credit {
  position: absolute;
  right: 0;
  bottom: 0;
  padding: 0 5px;
  background: rgba(255, 255, 255, .8);
  color: #333;
  font: 12px/16px "Liberation Sans", sans-serif;
}
.credit a { color: #0078a8; }
.ua { width: 12px; height: 8px; }

.map-foot {
  display: flex;
  align-items: center;
  gap: 12px;
  margin-top: 8px;
  color: #6b7676;
  font-size: 12px;
}
.coords { font: 11px/20px "Liberation Mono", monospace; }
.remove {
  display: flex;
  align-items: center;
  gap: 4px;
  padding: 0;
  border: 0;
  background: none;
  color: #c8141e;
}
.maps-link {
  display: flex;
  align-items: center;
  gap: 6px;
  width: fit-content;
  margin: 16px 0 4px;
  color: #0f7674;
  line-height: 22px;
}
.save {
  height: 36px;
  margin-top: 20px;
  padding: 0 16px;
  border: 0;
  border-radius: 8px;
  background: #115e59;
  color: #fff;
}
```
